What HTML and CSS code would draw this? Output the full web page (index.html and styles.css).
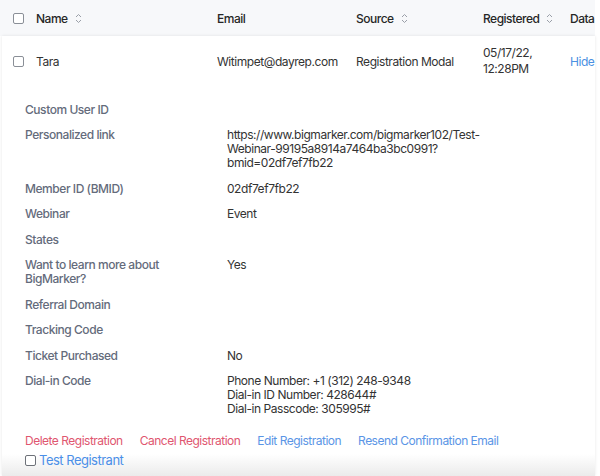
FILE: index.html
```html
<!DOCTYPE html>
<html>
<head>
<meta charset="utf-8">
<link rel="stylesheet" href="styles.css">
</head>
<body>
<div class="table">
  <div class="thead">
    <div class="cell chk"><span class="box"></span></div>
    <div class="cell th">Name <svg class="sort" width="7" height="11" viewBox="0 0 7 11"><path d="M1 4 L3.5 1.5 L6 4 M1 7 L3.5 9.5 L6 7" fill="none" stroke="#9a9fa8" stroke-width="1"/></svg></div>
    <div class="cell th">Email</div>
    <div class="cell th">Source <svg class="sort" width="7" height="11" viewBox="0 0 7 11"><path d="M1 4 L3.5 1.5 L6 4 M1 7 L3.5 9.5 L6 7" fill="none" stroke="#9a9fa8" stroke-width="1"/></svg></div>
    <div class="cell th">Registered <svg class="sort" width="7" height="11" viewBox="0 0 7 11"><path d="M1 4 L3.5 1.5 L6 4 M1 7 L3.5 9.5 L6 7" fill="none" stroke="#9a9fa8" stroke-width="1"/></svg></div>
    <div class="cell th">Data</div>
  </div>
  <div class="card">
    <div class="row">
      <div class="cell chk"><span class="box"></span></div>
      <div class="cell">Tara</div>
      <div class="cell">Witimpet@dayrep.com</div>
      <div class="cell">Registration Modal</div>
      <div class="cell date">05/17/22,<br>12:28PM</div>
      <div class="cell"><a class="link">Hide</a></div>
    </div>
    <div class="details">
      <div class="label">Custom User ID</div><div class="value"></div>
      <div class="label">Personalized link</div><div class="value">https://www.bigmarker.com/bigmarker102/Test-<br>Webinar-99195a8914a7464ba3bc0991?<br>bmid=02df7ef7fb22</div>
      <div class="label">Member ID (BMID)</div><div class="value">02df7ef7fb22</div>
      <div class="label">Webinar</div><div class="value">Event</div>
      <div class="label">States</div><div class="value"></div>
      <div class="label">Want to learn more about<br>BigMarker?</div><div class="value">Yes</div>
      <div class="label">Referral Domain</div><div class="value"></div>
      <div class="label">Tracking Code</div><div class="value"></div>
      <div class="label">Ticket Purchased</div><div class="value">No</div>
      <div class="label">Dial-in Code</div><div class="value">Phone Number: +1 (312) 248-9348<br>Dial-in ID Number: 428644#<br>Dial-in Passcode: 305995#</div>
    </div>
    <div class="actions">
      <a class="act red">Delete Registration</a>
      <a class="act red">Cancel Registration</a>
      <a class="act blue">Edit Registration</a>
      <a class="act blue">Resend Confirmation Email</a>
    </div>
    <label class="test"><span class="box2"></span><span>Test Registrant</span></label>
  </div>
</div>
</body>
</html>
```

FILE: styles.css
```css
* { box-sizing: border-box; }
html, body { margin: 0; padding: 0; background: #fff; }
body {
  font-family: Inter, "Noto Sans", sans-serif;
  font-size: 12px;
  letter-spacing: -0.45px;
  color: #333;
  width: 600px;
  height: 476px;
  overflow: hidden;
}
.table { width: 595px; }
.thead, .row {
  display: grid;
  grid-template-columns: 36px 181px 139px 127px 87px 1fr;
}
.thead {
  background: #f7f8fa;
  height: 36px;
  align-items: center;
}
.th {
  font-weight: 500;
  font-size: 12px;
  letter-spacing: -0.5px;
  color: #262626;
  display: flex;
  align-items: center;
  gap: 7px;
  white-space: nowrap;
}
.chk { padding-left: 13px; display: flex; align-items: center; }
.box {
  width: 11px; height: 11px;
  border: 1px solid #8a8f97;
  border-radius: 2px;
  background: #fff;
}
.card {
  height: 440px;
  margin-left: 2px;
  background: linear-gradient(to bottom, #fff 0, #fff 418px, #ebebeb 440px);
  box-shadow: 0 0 3px rgba(0,0,0,0.1);
}
.row {
  height: 50px;
  align-items: center;
  color: #333;
  margin-left: -2px;
}
.date { line-height: 16px; }
.link { color: #4a90e2; }
.details {
  display: grid;
  grid-template-columns: 202px 1fr;
  row-gap: 11.5px;
  padding: 16.5px 0 0 23px;
  line-height: 14px;
}
.label { color: #646b7b; font-weight: 500; }
.value { color: #333; }
.actions {
  display: flex;
  gap: 17px;
  padding: 17px 0 0 23px;
  line-height: 15px;
  letter-spacing: -0.5px;
}
.act { white-space: nowrap; }
.red { color: #e0566f; }
.blue { color: #5a95e6; }
.test {
  display: flex;
  align-items: center;
  gap: 3px;
  padding: 4px 0 0 23px;
  font-size: 13px;
  letter-spacing: -0.5px;
  color: #4b8fe8;
  line-height: 16px;
}
.box2 {
  width: 11px; height: 11px;
  border: 1px solid #6d7178;
  border-radius: 2px;
  background: #fff;
}
```
